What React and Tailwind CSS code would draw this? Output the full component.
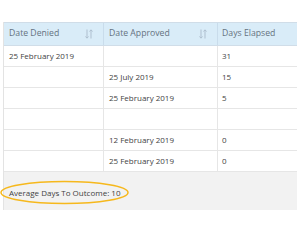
import React from "react";

function SortIcon() {
  return (
    <svg width="8" height="10" viewBox="0 0 8 10" className="shrink-0">
      <g stroke="#aebfcf" strokeWidth="1" fill="none">
        <path d="M2 0.5 V9" />
        <path d="M0.5 7.5 L2 9.2 L3.5 7.5" />
        <path d="M6 1 V9.5" />
        <path d="M4.5 2.5 L6 0.8 L7.5 2.5" />
      </g>
    </svg>
  );
}

const rows = [
  ["25 February 2019", "", "31"],
  ["", "25 July 2019", "15"],
  ["", "25 February 2019", "5"],
  ["", "", ""],
  ["", "12 February 2019", "0"],
  ["", "25 February 2019", "0"],
];

export default function App() {
  return (
    <div
      className="relative w-[300px] h-[240px] bg-white overflow-hidden"
      style={{ fontFamily: '"Open Sans", "Liberation Sans", sans-serif' }}
    >
      <div className="ml-[3px] mt-[22px] w-[294px] border-l border-[#e3e3e3]">
        <div className="grid grid-cols-[100px_114px_80px] h-[24px] bg-[#d9ecf8] border-t border-b border-[#d0dde8] text-[8.7px] text-[#65727f]">
          <div className="flex items-center justify-between pl-[5px] pr-[10px] border-r border-[#c9dceb]">
            <span>Date Denied</span>
            <SortIcon />
          </div>
          <div className="flex items-center justify-between pl-[5px] pr-[10px] border-r border-[#c9dceb]">
            <span>Date Approved</span>
            <SortIcon />
          </div>
          <div className="flex items-center pl-[4px]">
            <span>Days Elapsed</span>
          </div>
        </div>
        {rows.map((r, i) => (
          <div
            key={i}
            className="grid grid-cols-[100px_114px_80px] h-[21px] border-b border-[#e6e6e6] text-[8px] text-[#3f3f3f]"
          >
            <div className="flex items-center pl-[5px] border-r border-[#e6e6e6]">{r[0]}</div>
            <div className="flex items-center pl-[5px] border-r border-[#e6e6e6]">{r[1]}</div>
            <div className="flex items-center pl-[4px]">{r[2]}</div>
          </div>
        ))}
        <div className="h-[38px] bg-[#f2f2f2] flex items-center pl-[5px] pt-[4px] text-[8px] text-[#3f3f3f]">
          Average Days To Outcome: 10
        </div>
      </div>
      <svg
        className="absolute left-0 top-[180px]"
        width="132"
        height="26"
        viewBox="0 0 132 26"
      >
        <ellipse cx="64.5" cy="12.5" rx="63.5" ry="11" fill="none" stroke="#f6b81c" strokeWidth="1.5" />
      </svg>
    </div>
  );
}
